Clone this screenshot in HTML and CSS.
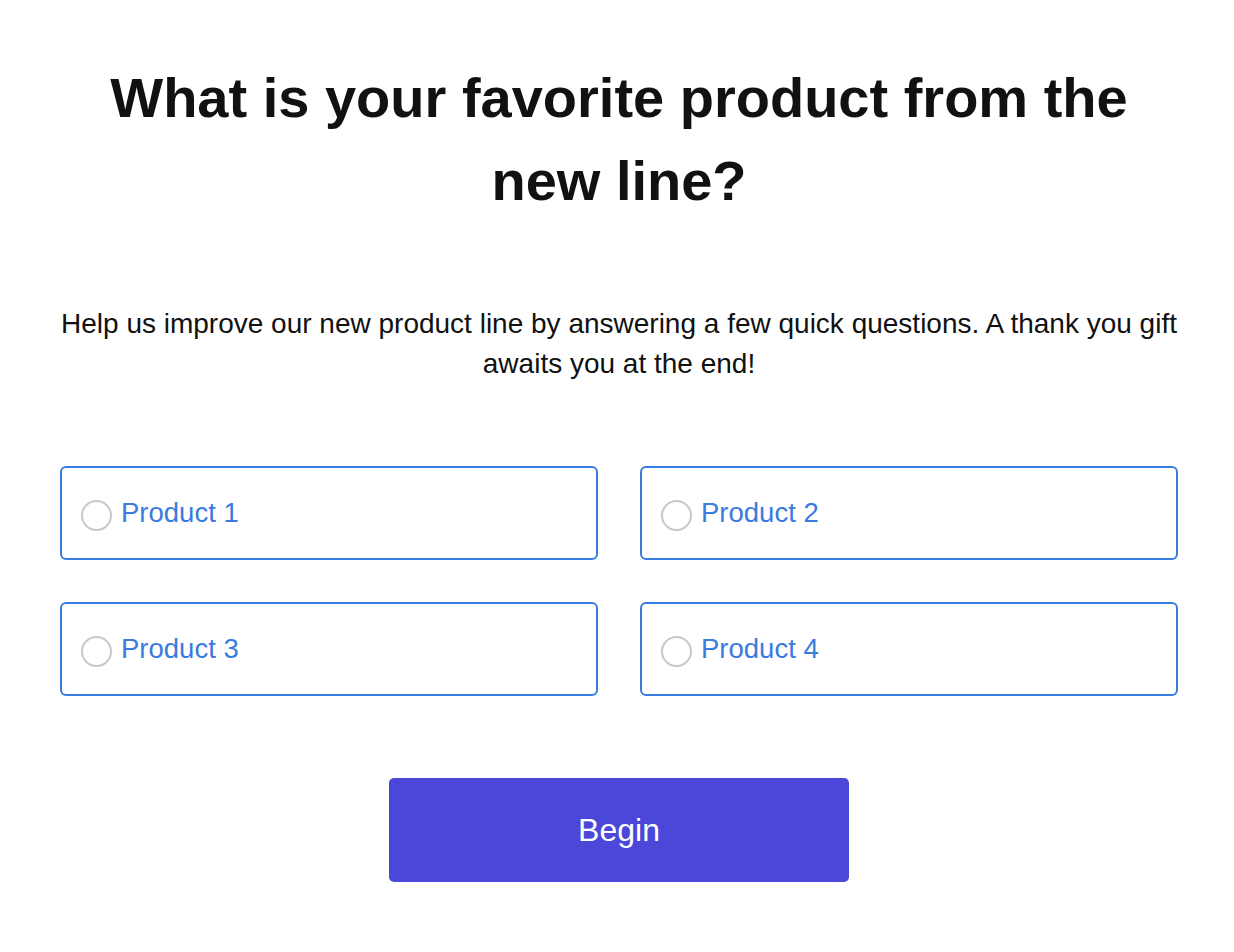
FILE: index.html
```html
<!DOCTYPE html>
<html lang="en">
<head>
    <meta charset="UTF-8">
    <meta name="viewport" content="width=device-width, initial-scale=1.0">
    <title>Product Survey</title>
    <link rel="stylesheet" href="styles.css">
</head>
<body>
    <div class="survey">
        <h1>What is your favorite product from the new line?</h1>

        <p class="intro">Help us improve our new product line by answering a few quick questions. A thank you gift awaits you at the end!</p>

        <div class="options">
            <label class="option">
                <input type="radio" name="product" value="1">
                <span>Product 1</span>
            </label>
            <label class="option">
                <input type="radio" name="product" value="2">
                <span>Product 2</span>
            </label>
            <label class="option">
                <input type="radio" name="product" value="3">
                <span>Product 3</span>
            </label>
            <label class="option">
                <input type="radio" name="product" value="4">
                <span>Product 4</span>
            </label>
        </div>

        <div class="actions">
            <button type="button">Begin</button>
        </div>
    </div>
</body>
</html>
```

FILE: styles.css
```css
body {
    font-family: "Liberation Sans", Arial, sans-serif;
    margin: 0;
    background-color: white;
    color: #111;
}

.survey {
    max-width: 1122px;
    margin: 0 auto;
    padding: 56px 0 40px 4px;
    box-sizing: border-box;
    text-align: center;
}

h1 {
    font-size: 56px;
    line-height: 83px;
    font-weight: bold;
    margin: 0 40px 82px;
}

.intro {
    font-size: 28px;
    line-height: 40px;
    margin: 0 0 82px;
}

.options {
    display: grid;
    grid-template-columns: 1fr 1fr;
    gap: 42px 42px;
    text-align: left;
}

.option {
    display: flex;
    align-items: center;
    height: 94px;
    padding: 0 19px;
    border: 2px solid #3a7be0;
    border-radius: 6px;
    box-sizing: border-box;
    color: #3a7be0;
    font-size: 27.5px;
    cursor: pointer;
}

.option input {
    appearance: none;
    width: 31px;
    height: 31px;
    margin: 4px 9px 0 0;
    border: 2px solid #c8c8c8;
    border-radius: 50%;
    box-sizing: border-box;
}

.actions {
    margin-top: 82px;
}

button {
    width: 460px;
    height: 104px;
    background-color: #4b47d8;
    color: white;
    border: none;
    border-radius: 5px;
    font-family: inherit;
    font-size: 32px;
    cursor: pointer;
}
```
